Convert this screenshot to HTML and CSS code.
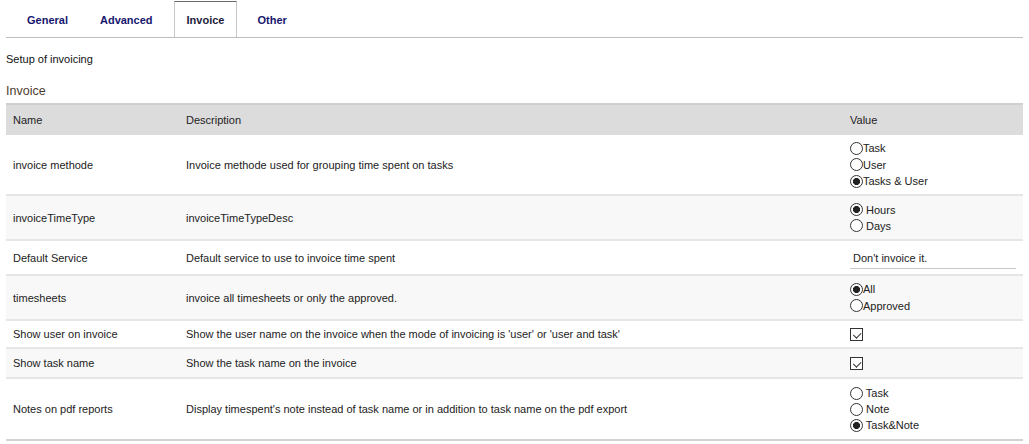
FILE: index.html
```html
<!DOCTYPE html>
<html>
<head>
<meta charset="utf-8">
<link rel="stylesheet" href="styles.css">
</head>
<body>
<div class="page">
  <nav class="tabs">
    <a class="tab">General</a>
    <a class="tab">Advanced</a>
    <a class="tab active">Invoice</a>
    <a class="tab">Other</a>
  </nav>
  <p class="intro">Setup of invoicing</p>
  <h2 class="section">Invoice</h2>
  <table class="settings">
    <thead>
      <tr><th class="c-name">Name</th><th class="c-desc">Description</th><th class="c-val">Value</th></tr>
    </thead>
    <tbody>
      <tr class="r1">
        <td>invoice methode</td>
        <td>Invoice methode used for grouping time spent on tasks</td>
        <td>
          <label class="opt tight"><input type="radio" name="m">Task</label>
          <label class="opt tight"><input type="radio" name="m">User</label>
          <label class="opt tight"><input type="radio" name="m" checked>Tasks &amp; User</label>
        </td>
      </tr>
      <tr class="alt r2">
        <td>invoiceTimeType</td>
        <td>invoiceTimeTypeDesc</td>
        <td>
          <label class="opt"><input type="radio" name="t" checked> Hours</label>
          <label class="opt"><input type="radio" name="t"> Days</label>
        </td>
      </tr>
      <tr class="r3">
        <td>Default Service</td>
        <td>Default service to use to invoice time spent</td>
        <td><input class="field" type="text" value="Don't invoice it."></td>
      </tr>
      <tr class="alt r4">
        <td>timesheets</td>
        <td>invoice all timesheets or only the approved.</td>
        <td>
          <label class="opt tight"><input type="radio" name="s" checked>All</label>
          <label class="opt tight"><input type="radio" name="s">Approved</label>
        </td>
      </tr>
      <tr class="r5">
        <td>Show user on invoice</td>
        <td>Show the user name on the invoice when the mode of invoicing is 'user' or 'user and task'</td>
        <td><input class="check" type="checkbox" checked></td>
      </tr>
      <tr class="alt r6">
        <td>Show task name</td>
        <td>Show the task name on the invoice</td>
        <td><input class="check" type="checkbox" checked></td>
      </tr>
      <tr class="r7">
        <td>Notes on pdf reports</td>
        <td>Display timespent's note instead of task name or in addition to task name on the pdf export</td>
        <td>
          <label class="opt"><input type="radio" name="n"> Task</label>
          <label class="opt"><input type="radio" name="n"> Note</label>
          <label class="opt"><input type="radio" name="n" checked> Task&amp;Note</label>
        </td>
      </tr>
    </tbody>
  </table>
</div>
</body>
</html>
```

FILE: styles.css
```css
* { box-sizing: border-box; }
html, body { margin: 0; background: #fff; }
body {
  font-family: "Liberation Sans", Arial, sans-serif;
  font-size: 11px;
  color: #222;
}
.page { padding: 0 6px; }

.tabs {
  display: flex;
  gap: 8px;
  padding: 1px 0 0 9px;
  border-bottom: 1px solid #bdbdbd;
  height: 38px;
}
.tab {
  display: flex;
  align-items: center;
  padding: 0 11px 0 11px;
  border: 1px solid transparent;
  border-bottom: none;
  font-weight: bold;
  color: #16166e;
  height: 36px;
  cursor: pointer;
}
.tab.active {
  padding: 0 12px;
  margin-left: 1px;
  border-color: #c6c6c6;
  border-top-color: #6a6a6a;
  color: #1c1c3a;
  background: #fff;
}

.intro {
  margin: 14px 0 0 0;
  line-height: 14px;
  color: #111;
}
.section {
  margin: 18px 0 0 0;
  font-size: 12.5px;
  font-weight: normal;
  color: #4e3c30;
  line-height: 15px;
  padding-bottom: 4px;
}

.settings {
  width: 100%;
  border-collapse: collapse;
  border-top: 2px solid #cfcfcf;
  border-bottom: 2px solid #d2d2d2;
}
.settings th {
  background: #dcdcdd;
  font-weight: normal;
  text-align: left;
  height: 31px;
  padding: 0 7px;
  color: #222;
}
.settings td {
  padding: 0 7px;
  vertical-align: middle;
  border-top: 2px solid #e6e6e6;
  color: #222;
}
.settings thead + tbody tr:first-child td { border-top: none; }
.c-name { width: 173px; }
.c-val { width: 180px; }
.alt td { background: #f8f8f8; }

.r1 td { height: 60px; }
.r2 td { height: 45px; }
.r3 td { height: 35px; }
.r4 td { height: 45px; }
.r5 td { height: 28px; }
.r6 td { height: 30px; }
.r7 td { height: 62px; }

.opt {
  display: flex;
  align-items: center;
  line-height: 16px;
  height: 16px;
  white-space: pre;
}
.opt.tight { height: 16.5px; }
.opt input[type="radio"] {
  appearance: none;
  -webkit-appearance: none;
  margin: 0;
  width: 13px;
  height: 13px;
  border: 1px solid #333;
  border-radius: 50%;
  background: #fff;
  flex: none;
}
.opt input[type="radio"]:checked {
  background: radial-gradient(circle, #222 0 3.3px, #fff 3.8px);
}

.field {
  display: block;
  width: 166px;
  border: none;
  border-bottom: 1px solid #c8c8c8;
  background: transparent;
  font: inherit;
  color: #222;
  padding: 3px 3px 4px 3px;
  margin: 2px 0 0 0;
  outline: none;
}

.check {
  appearance: none;
  -webkit-appearance: none;
  display: block;
  margin: 0;
  width: 13px;
  height: 13px;
  border: 1px solid #333;
  background: #fff;
  position: relative;
}
.check:checked::after {
  content: "";
  position: absolute;
  left: 3px;
  top: 1px;
  width: 6px;
  height: 3.5px;
  border-left: 1px solid #333;
  border-bottom: 1px solid #333;
  transform: translate(-0.5px, 2px) rotate(-45deg);
}
```
